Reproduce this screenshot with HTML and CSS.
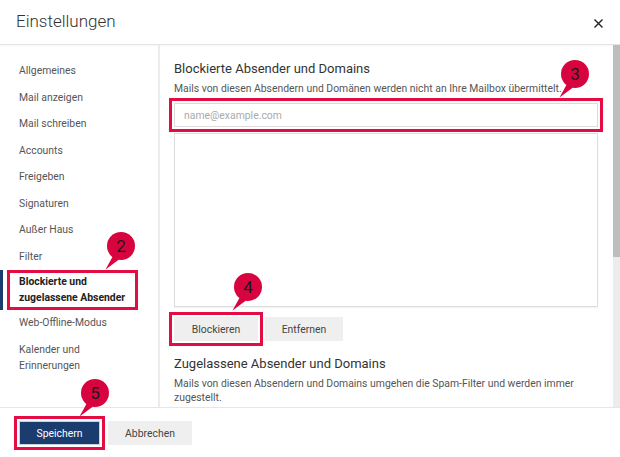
FILE: index.html
```html
<!DOCTYPE html>
<html lang="de">
<head>
    <meta charset="UTF-8">
    <meta name="viewport" content="width=device-width, initial-scale=1.0">
    <title>Einstellungen</title>
    <link rel="stylesheet" href="styles.css">
</head>
<body>
    <div class="dialog">
        <div class="dialog-header">
            <h1>Einstellungen</h1>
            <button class="close" aria-label="Schließen">
                <svg width="9" height="9" viewBox="0 0 9 9"><path d="M0.5 0.5 L8.5 8.5 M8.5 0.5 L0.5 8.5" stroke="#222" stroke-width="1.4"/></svg>
            </button>
        </div>

        <div class="dialog-body">
            <ul class="nav">
                <li>Allgemeines</li>
                <li>Mail anzeigen</li>
                <li>Mail schreiben</li>
                <li>Accounts</li>
                <li>Freigeben</li>
                <li>Signaturen</li>
                <li>Außer Haus</li>
                <li>Filter</li>
                <li class="active"><span class="flag">Blockierte und zugelassene Absender</span></li>
                <li>Web-Offline-Modus</li>
                <li>Kalender und<br>Erinnerungen</li>
            </ul>

            <div class="content">
                <h2>Blockierte Absender und Domains</h2>
                <p class="hint">Mails von diesen Absendern und Domänen werden nicht an Ihre Mailbox übermittelt.</p>
                <input type="text" class="address flagged" placeholder="name@example.com">
                <div class="list"></div>
                <div class="actions">
                    <button class="btn flagged">Blockieren</button>
                    <button class="btn">Entfernen</button>
                </div>

                <h2 class="second">Zugelassene Absender und Domains</h2>
                <p class="hint">Mails von diesen Absendern und Domains umgehen die Spam-Filter und werden immer zugestellt.</p>
            </div>

            <div class="scrollbar"><div class="thumb"></div></div>
        </div>

        <div class="dialog-footer">
            <button class="btn btn-primary flagged">Speichern</button>
            <button class="btn">Abbrechen</button>
        </div>

        <!-- numbered callouts -->
        <svg class="callout c2" width="32" height="40" viewBox="0 0 32 40"><path d="M9 25 L1.5 38.5 L15 28.5 Z" fill="#d8043f"/><circle cx="17" cy="15" r="14" fill="#d8043f"/><text x="17" y="21" text-anchor="middle">2</text></svg>
        <svg class="callout c3" width="32" height="40" viewBox="0 0 32 40"><path d="M9 25 L1.5 38.5 L15 28.5 Z" fill="#d8043f"/><circle cx="17" cy="15" r="14" fill="#d8043f"/><text x="17" y="21" text-anchor="middle">3</text></svg>
        <svg class="callout c4" width="32" height="40" viewBox="0 0 32 40"><path d="M9 25 L1.5 38.5 L15 28.5 Z" fill="#d8043f"/><circle cx="17" cy="15" r="14" fill="#d8043f"/><text x="17" y="21" text-anchor="middle">4</text></svg>
        <svg class="callout c5" width="32" height="40" viewBox="0 0 32 40"><path d="M9 25 L1.5 38.5 L15 28.5 Z" fill="#d8043f"/><circle cx="17" cy="15" r="14" fill="#d8043f"/><text x="17" y="21" text-anchor="middle">5</text></svg>
    </div>
</body>
</html>
```

FILE: styles.css
```css
body {
    margin: 0;
    font-family: Roboto, "Liberation Sans", Arial, sans-serif;
    background-color: #fff;
}

.dialog {
    position: relative;
    width: 620px;
    height: 457px;
    display: flex;
    flex-direction: column;
    overflow: hidden;
    color: #555;
}

.dialog-header {
    height: 44px;
    flex-shrink: 0;
    display: flex;
    align-items: center;
    justify-content: space-between;
    padding: 0 17px 0 16px;
    border-bottom: 1px solid #e4e4e4;
    box-shadow: 0 1px 2px rgba(0, 0, 0, 0.04);
}

.dialog-header h1 {
    margin: 0 0 2px 0;
    font-size: 17px;
    font-weight: 300;
    color: #333;
}

.close {
    border: none;
    background: none;
    padding: 0;
    width: 9px;
    height: 9px;
    display: flex;
    margin-top: 2px;
}

.dialog-body {
    flex: 1;
    display: flex;
    min-height: 0;
}

.nav {
    list-style: none;
    margin: 0;
    padding: 13px 0 0 0;
    width: 158px;
    flex-shrink: 0;
    border-right: 2px solid #ececec;
    font-size: 10.4px;
    line-height: 16px;
    color: #555;
}

.nav li {
    padding: 5px 0 5.5px 19px;
}

.nav li.active {
    padding: 0 20px 0 4px;
    border-left: 3px solid #1b3c6e;
    font-weight: bold;
    color: #222;
}

.nav .flag {
    display: block;
    padding: 1px 6px 1px 9px;
    border: 3px solid #e30d44;
}

.content {
    flex: 1;
    overflow: hidden;
    padding: 14px 15px 0 14px;
}

.scrollbar {
    width: 7px;
    flex-shrink: 0;
    background-color: #ececec;
}

.thumb {
    height: 212px;
    background-color: #bdbdbd;
}

.content h2 {
    margin: 0;
    font-size: 13px;
    line-height: 20px;
    font-weight: normal;
    color: #333;
}

.content h2.second {
    margin-top: 13px;
}

.hint {
    margin: 3px 0 0 0;
    font-size: 10.4px;
    line-height: 14px;
    color: #555;
}

.address {
    display: block;
    box-sizing: border-box;
    width: 100%;
    height: 24px;
    margin-top: 7px;
    padding: 0 9px;
    border: 1px solid #dcdcdc;
    font-family: inherit;
    font-size: 10.4px;
}

.address::placeholder {
    color: #aaa;
}

.list {
    height: 174px;
    margin-top: 6px;
    box-sizing: border-box;
    border: 1px solid #dedede;
    box-shadow: 0 1px 1px rgba(0, 0, 0, 0.05);
}

.actions {
    display: flex;
    gap: 7px;
    margin-top: 10px;
}

.btn {
    height: 24px;
    min-width: 78px;
    padding: 0 16px;
    border: none;
    background-color: #efefef;
    color: #444;
    font-family: inherit;
    font-size: 10.4px;
}

.actions .btn:first-child {
    width: 84px;
}

.btn-primary {
    width: 81px;
    background-color: #1b3c6e;
    color: #fff;
    box-shadow: inset 0 0 0 1px #c9d2e0;
}

.flagged {
    outline: 3px solid #e30d44;
    outline-offset: 2px;
}

.dialog-footer {
    height: 50px;
    flex-shrink: 0;
    box-sizing: border-box;
    border-top: 1px solid #e6e6e6;
    padding: 13px 0 0 19px;
    display: flex;
    align-items: flex-start;
    gap: 8px;
}

.dialog-footer .btn:last-child {
    width: 84px;
}

/* numbered callouts over the screenshot */
.callout {
    position: absolute;
}

.callout text {
    font-family: Roboto, "Liberation Sans", sans-serif;
    font-size: 17px;
    fill: #1a1a1a;
}

.c2 { left: 104px; top: 231px; }
.c3 { left: 558px; top: 59px; }
.c4 { left: 231px; top: 272px; }
.c5 { left: 78px; top: 378px; }
```
